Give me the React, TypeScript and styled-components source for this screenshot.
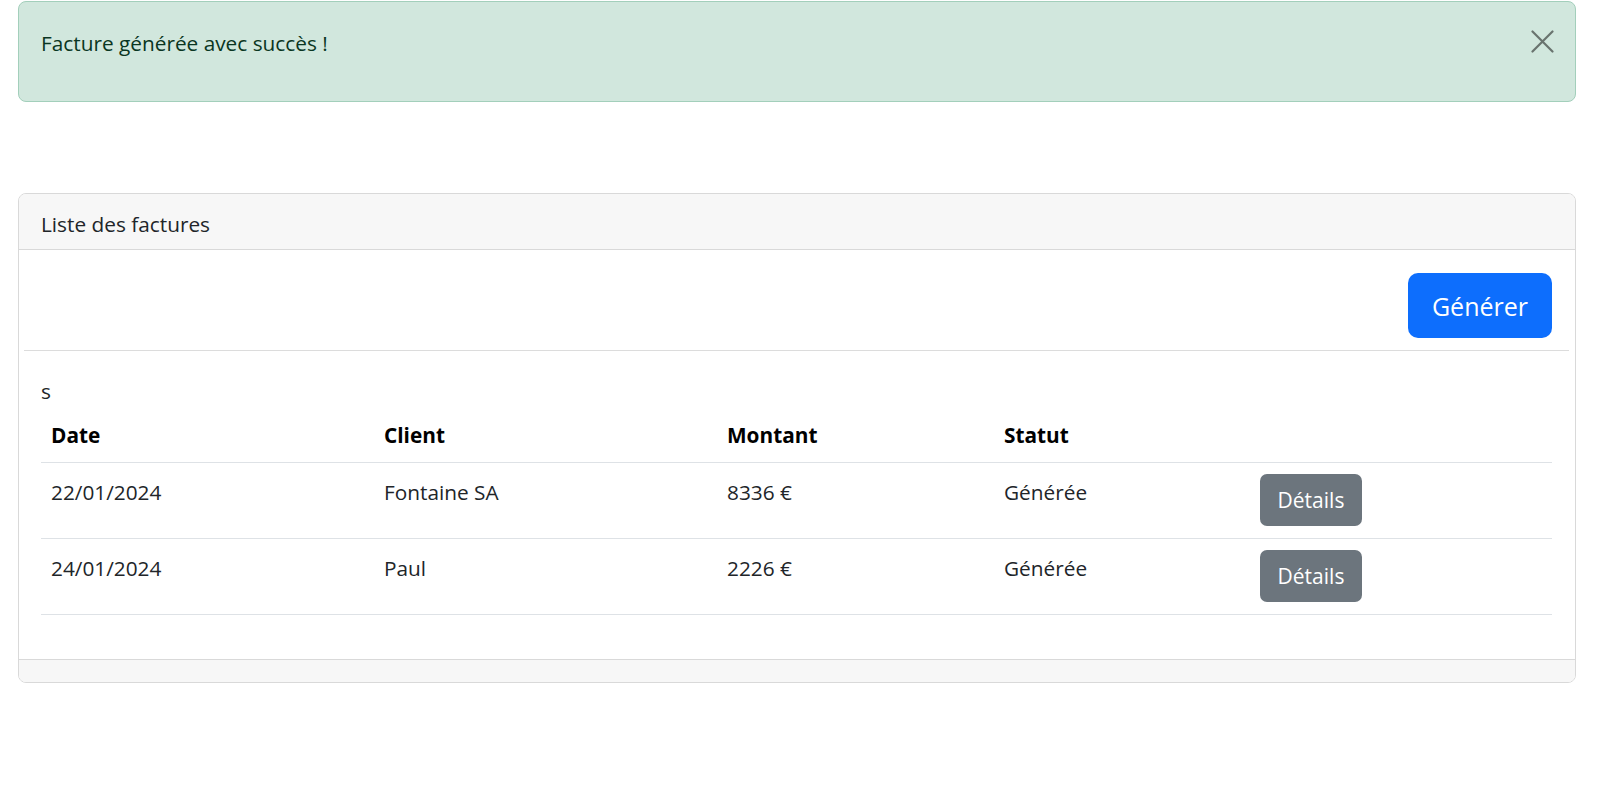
import styled, { createGlobalStyle } from "styled-components";

const GlobalStyle = createGlobalStyle`
  body {
    margin: 0;
    background: #fff;
    color: #212529;
    font-family: "Open Sans", "Noto Sans", sans-serif;
    font-size: 20.8px;
    line-height: 30px;
  }
  * {
    box-sizing: border-box;
  }
`;

const Page = styled.div`
  padding: 1px 24px 0 18px;
`;

const Alert = styled.div`
  display: flex;
  justify-content: space-between;
  align-items: flex-start;
  height: 101px;
  padding: 26px 21px 0 22px;
  background: #d1e7dd;
  border: 1px solid #a3cfbb;
  border-radius: 8px;
  color: #0a3622;
`;

const CloseButton = styled.button`
  width: 23px;
  height: 23px;
  margin-top: 2px;
  padding: 0;
  border: 0;
  background: transparent;
  cursor: pointer;
  display: flex;
`;

const Card = styled.div`
  margin-top: 91px;
  border: 1px solid #d9d9d9;
  border-radius: 8px;
  overflow: hidden;
`;

const CardHeader = styled.div`
  height: 56px;
  padding: 15px 22px 0;
  background: #f7f7f7;
  border-bottom: 1px solid #d9d9d9;
`;

const Toolbar = styled.div`
  display: flex;
  justify-content: flex-end;
  padding: 23px 23px 12px;
`;

const PrimaryButton = styled.button`
  height: 65px;
  padding: 0 24px;
  border: 0;
  border-radius: 10px;
  background: #0d6efd;
  color: #fff;
  font-family: inherit;
  font-size: 25px;
  cursor: pointer;
`;

const Divider = styled.hr`
  margin: 0 6px 0 5px;
  border: 0;
  height: 1px;
  background: #dcdcdc;
`;

const CardBody = styled.div`
  padding: 25px 23px 44px 22px;
`;

const Note = styled.div`
  margin-bottom: 7px;
`;

const Table = styled.table`
  width: 100%;
  border-collapse: collapse;
  table-layout: fixed;
`;

const Th = styled.th<{ $w: number }>`
  width: ${(p) => p.$w}px;
  padding: 7px 10px 12px;
  text-align: left;
  font-weight: 700;
  color: #000;
  border-bottom: 1px solid #dee2e6;
`;

const Td = styled.td<{ $action?: boolean }>`
  padding: ${(p) => (p.$action ? "10px 10px 12px" : "14px 10px 0")};
  vertical-align: top;
  color: #212529;
  border-bottom: 1px solid #dee2e6;
`;

const SecondaryButton = styled.button`
  display: block;
  margin-top: 1px;
  width: 102px;
  height: 52px;
  padding: 0;
  border: 0;
  border-radius: 7px;
  background: #6c757d;
  color: #fff;
  font-family: inherit;
  font-size: 21px;
  cursor: pointer;
`;

const CardFooter = styled.div`
  height: 23px;
  background: #f7f7f7;
  border-top: 1px solid #d9d9d9;
`;

const columns = [
  { label: "Date", w: 333 },
  { label: "Client", w: 343 },
  { label: "Montant", w: 277 },
  { label: "Statut", w: 256 },
  { label: "", w: 302 },
];

const factures = [
  { id: 1, date: "22/01/2024", client: "Fontaine SA", montant: "8336 €", statut: "Générée" },
  { id: 2, date: "24/01/2024", client: "Paul", montant: "2226 €", statut: "Générée" },
];

export default function App() {
  return (
    <Page>
      <GlobalStyle />
      <Alert>
        <span>Facture générée avec succès !</span>
        <CloseButton aria-label="Fermer">
          <svg width="23" height="23" viewBox="0 0 23 23">
            <path d="M1.5 1.5 L21.5 21.5 M21.5 1.5 L1.5 21.5" stroke="#69736e" strokeWidth="2.2" strokeLinecap="round" />
          </svg>
        </CloseButton>
      </Alert>

      <Card>
        <CardHeader>Liste des factures</CardHeader>
        <Toolbar>
          <PrimaryButton>Générer</PrimaryButton>
        </Toolbar>
        <Divider />
        <CardBody>
          <Note>s</Note>
          <Table>
            <thead>
              <tr>
                {columns.map((c, i) => (
                  <Th key={i} $w={c.w}>
                    {c.label}
                  </Th>
                ))}
              </tr>
            </thead>
            <tbody>
              {factures.map((f) => (
                <tr key={f.id}>
                  <Td>{f.date}</Td>
                  <Td>{f.client}</Td>
                  <Td>{f.montant}</Td>
                  <Td>{f.statut}</Td>
                  <Td $action>
                    <SecondaryButton>Détails</SecondaryButton>
                  </Td>
                </tr>
              ))}
            </tbody>
          </Table>
        </CardBody>
        <CardFooter />
      </Card>
    </Page>
  );
}
